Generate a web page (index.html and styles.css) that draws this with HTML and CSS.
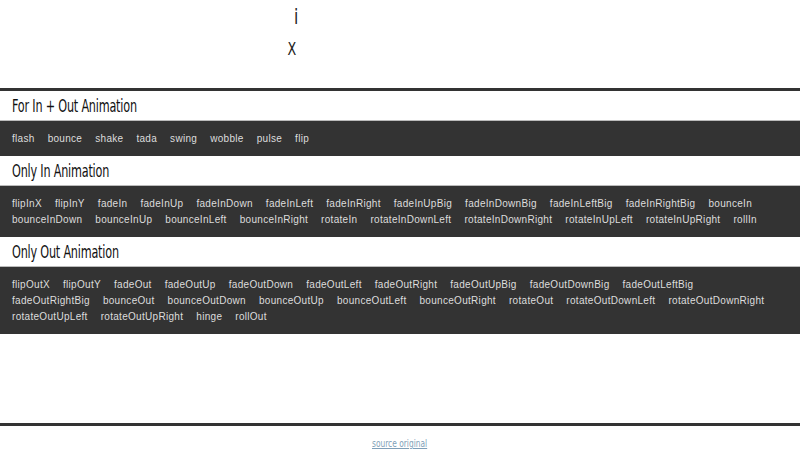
FILE: index.html
```html
<!DOCTYPE html>
<html>
<head>
<meta charset="utf-8">
<link rel="stylesheet" href="styles.css">
</head>
<body>
<div class="stage">
  <div class="glyph glyph-i">i</div>
  <div class="glyph glyph-x">X</div>
</div>
<main class="panel">
  <h2 class="title"><span class="title-text">For In + Out Animation</span></h2>
  <div class="list"><span>flash</span><span>bounce</span><span>shake</span><span>tada</span><span>swing</span><span>wobble</span><span>pulse</span><span>flip</span></div>
  <h2 class="title"><span class="title-text">Only In Animation</span></h2>
  <div class="list"><span>flipInX</span><span>flipInY</span><span>fadeIn</span><span>fadeInUp</span><span>fadeInDown</span><span>fadeInLeft</span><span>fadeInRight</span><span>fadeInUpBig</span><span>fadeInDownBig</span><span>fadeInLeftBig</span><span>fadeInRightBig</span><span>bounceIn</span><span>bounceInDown</span><span>bounceInUp</span><span>bounceInLeft</span><span>bounceInRight</span><span>rotateIn</span><span>rotateInDownLeft</span><span>rotateInDownRight</span><span>rotateInUpLeft</span><span>rotateInUpRight</span><span>rollIn</span></div>
  <h2 class="title"><span class="title-text">Only Out Animation</span></h2>
  <div class="list"><span>flipOutX</span><span>flipOutY</span><span>fadeOut</span><span>fadeOutUp</span><span>fadeOutDown</span><span>fadeOutLeft</span><span>fadeOutRight</span><span>fadeOutUpBig</span><span>fadeOutDownBig</span><span>fadeOutLeftBig</span><span>fadeOutRightBig</span><span>bounceOut</span><span>bounceOutDown</span><span>bounceOutUp</span><span>bounceOutLeft</span><span>bounceOutRight</span><span>rotateOut</span><span>rotateOutDownLeft</span><span>rotateOutDownRight</span><span>rotateOutUpLeft</span><span>rotateOutUpRight</span><span>hinge</span><span>rollOut</span></div>
</main>
<footer class="footer">
  <a href="#" class="source">source original</a>
</footer>
</body>
</html>
```
FILE: styles.css
```css
html, body {
  margin: 0;
  padding: 0;
  background: #fff;
}
body {
  width: 800px;
  height: 450px;
  overflow: hidden;
  font-family: "DejaVu Sans", sans-serif;
}
.stage {
  height: 88px;
  position: relative;
  color: #333;
}
.glyph {
  position: absolute;
  font-family: "DejaVu Sans", sans-serif;
  line-height: 1;
  color: #222;
}
.glyph-i {
  left: 293px;
  top: 6px;
  font-size: 22px;
  transform: scaleX(0.7);
}
.glyph-x {
  left: 286px;
  top: 41px;
  font-size: 17px;
  transform: scaleX(0.75);
}
.panel {
  border-top: 3px solid #333;
  height: 243px;
}
.title {
  margin: 0;
  height: 29px;
  line-height: 31px;
  padding: 0 12px;
  font-family: "DejaVu Sans", sans-serif;
  font-size: 17px;
  font-weight: normal;
  color: #111;
  border-bottom: 1px solid #bbb;
  white-space: nowrap;
}
.title-text {
  display: inline-block;
  transform: scaleX(0.66);
  transform-origin: left center;
  letter-spacing: -0.3px;
}
.list {
  background: #333;
  padding: 10px 12px 9px;
  line-height: 16px;
  font-family: "Liberation Sans", Arial, sans-serif;
  font-size: 10px;
  letter-spacing: 0.3px;
  color: #ddd;
}
.list span {
  display: inline-block;
  margin-right: 13px;
}
.footer {
  margin-top: 89px;
  border-top: 3px solid #333;
  text-align: center;
  padding-top: 6px;
}
.source {
  display: inline-block;
  font-family: "DejaVu Sans", sans-serif;
  font-size: 11px;
  transform: scaleX(0.68);
  color: #7f9fb8;
  text-decoration: underline;
}
```
